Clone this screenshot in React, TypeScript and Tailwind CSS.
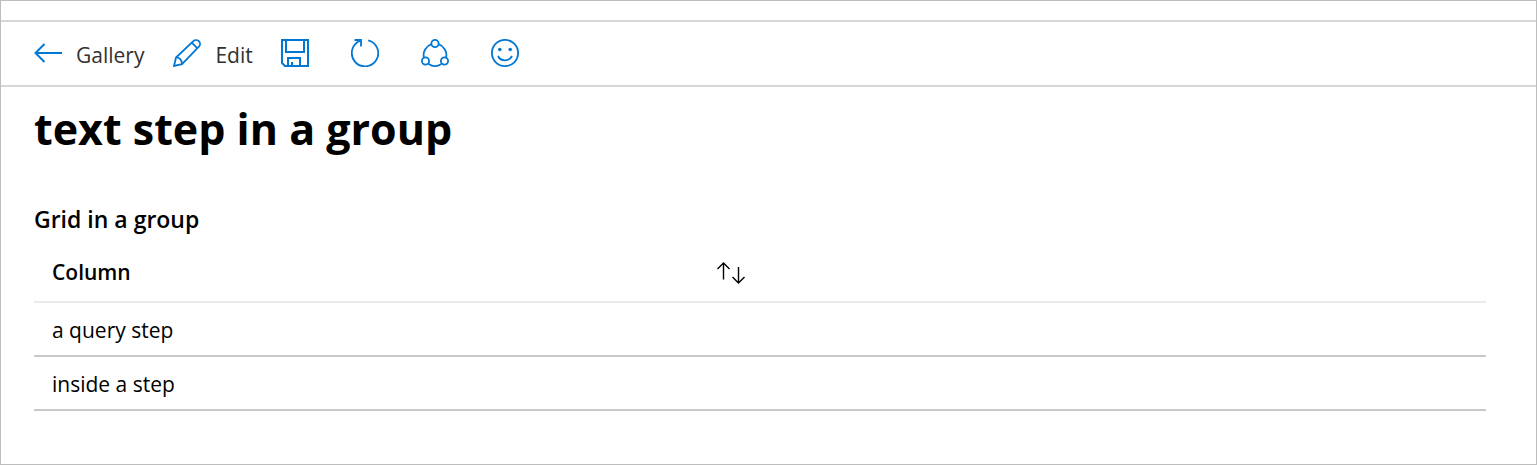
import type { ReactNode } from 'react';

function Icon({ children }: { children: ReactNode }) {
  return (
    <svg
      className="size-7 shrink-0 text-[#0078d4]"
      viewBox="0 0 28 28"
      fill="none"
      stroke="currentColor"
      strokeWidth="1.8"
      aria-hidden="true"
    >
      {children}
    </svg>
  );
}

const rows = ['a query step', 'inside a step'];

export default function App() {
  return (
    <div className="flex min-h-screen flex-col border border-[#bdbdbd] bg-white font-['Open_Sans','Noto_Sans',sans-serif] text-black">
      <div className="h-[19px]" />
      <nav className="flex h-[67px] items-center border-y-2 border-[#d6d6d6] pb-0.5 pl-[33px] text-[21px] leading-8 text-[#323130]">
        <a href="#gallery" className="mr-[29px] flex items-center gap-[14px]">
          <Icon>
            <path d="M28 14H1.5M10.5 5 1.5 14l9 9" strokeWidth="2" />
          </Icon>
          <span className="pt-1">Gallery</span>
        </a>
        <button type="button" className="mr-7 flex items-center gap-[14px]">
          <Icon>
            <path d="M1 27 3 18.5 20.3 2.200a3.900 3.900 0 0 1 5.600 5.500L9 25.200Z" />
            <path d="M18.800 3.700l5.600 5.600M3 18.500c3-.4 6.200 2.600 6 6.700" />
          </Icon>
          <span className="pt-1">Edit</span>
        </button>
        <div className="flex items-center gap-[42px]">
          <button type="button" aria-label="Save">
            <Icon>
              <path d="M1 1h26v26H4l-3-3ZM5 1v12h18V1M7 27v-8h12v8M11 27v-4" strokeWidth="2" />
            </Icon>
          </button>
          <button type="button" aria-label="Refresh">
            <Icon>
              <path d="M17.200 1.300A13.200 13.200 0 1 1 9.500 1.700M3.500 1H10V7.500" />
            </Icon>
          </button>
          <button type="button" aria-label="Share">
            <Icon>
              <circle cx="14" cy="4.500" r="3.600" />
              <circle cx="4.500" cy="22" r="3.600" />
              <circle cx="23.500" cy="22" r="3.600" />
              <path d="M10.500 5.200A11.500 11.500 0 0 0 2.900 18.600M17.500 5.200a11.500 11.500 0 0 1 7.600 13.400M7.600 24.900a11.500 11.500 0 0 0 12.800 0" />
            </Icon>
          </button>
          <button type="button" aria-label="Feedback">
            <Icon>
              <circle cx="14" cy="14" r="13.100" />
              <circle cx="8.800" cy="10.500" r="1.800" fill="currentColor" stroke="none" />
              <circle cx="19.200" cy="10.500" r="1.800" fill="currentColor" stroke="none" />
              <path d="M7 17c2.700 5.800 11.300 5.800 14 0" />
            </Icon>
          </button>
        </div>
      </nav>
      <main className="pr-[50px] pl-[33px]">
        <h1 className="mt-3 text-[43px] leading-[60px] font-bold">text step in a group</h1>
        <h2 id="grid-title" className="mt-[42px] text-[23px] leading-9 font-semibold">
          Grid in a group
        </h2>
        <table aria-labelledby="grid-title" className="w-full border-collapse text-left text-[21px]">
          <thead>
            <tr className="border-b-2 border-[#eaeaea]">
              <th scope="col" className="h-[65px] px-[18px] pt-2 font-semibold">
                <div className="grid grid-cols-2 items-center">
                  <span>Column</span>
                  <button type="button" aria-label="Sort by Column" className="-ml-[43px] w-[29px]">
                    <svg
                      className="h-6 w-[29px]"
                      viewBox="0 0 29 24"
                      fill="none"
                      stroke="currentColor"
                      strokeWidth="1.400"
                      aria-hidden="true"
                    >
                      <path d="M6.500 18.500V2M.5 8l6-6 6 6M21.500 6v16M15.500 16l6 6 6-6" />
                    </svg>
                  </button>
                </div>
              </th>
            </tr>
          </thead>
          <tbody>
            {rows.map((row) => (
              <tr key={row} className="border-b-2 border-[#c8c8c8]">
                <td className="h-[54px] px-[18px] pt-1">{row}</td>
              </tr>
            ))}
          </tbody>
        </table>
      </main>
    </div>
  );
}
